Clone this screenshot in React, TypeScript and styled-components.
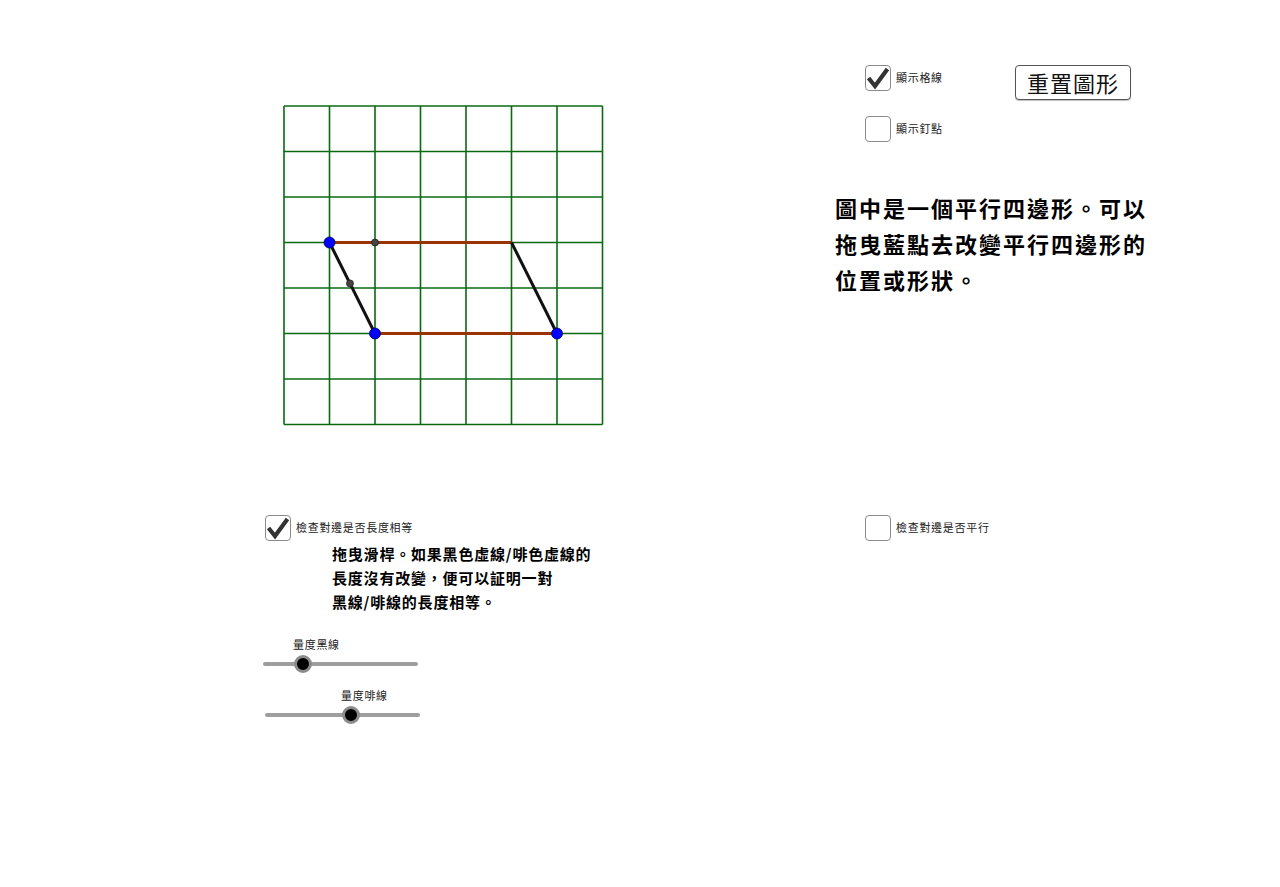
import styled, {createGlobalStyle} from 'styled-components';

const GlobalStyle = createGlobalStyle`
  html, body {
    margin: 0;
    padding: 0;
    background: #ffffff;
  }
  body {
    font-family: "Noto Sans CJK TC", "Noto Sans", sans-serif;
    color: #000;
  }
`

const CELL = 45.5
const GRID = 7

const Board = styled.div`
  display: grid;
  grid-template-columns: 572px 1fr;
  grid-template-rows: 515px auto;
  padding-left: 263px;
  width: 1280px;
  height: 887px;
  box-sizing: border-box;
`

const GraphCell = styled.div`
  padding: 104px 0 0 19px;
`

const SidePanel = styled.div`
  padding-top: 65px;
`

const Controls = styled.div`
  display: flex;
  flex-direction: column;
  gap: 16px;
  padding-left: 30px;
`

const TopRow = styled.div`
  display: grid;
  grid-template-columns: 150px auto;
  align-items: start;
`

const CheckRow = styled.label`
  display: flex;
  align-items: center;
  gap: 5px;
  margin-left: ${p => p.$offset ?? 0}px;
`

const Box = styled.span`
  width: 26px;
  height: 26px;
  box-sizing: border-box;
  border: 1.5px solid #8a8a8a;
  border-radius: 4px;
  background: #fff;
  display: flex;
  align-items: center;
  justify-content: center;
`

const SmallLabel = styled.span`
  font-size: 11px;
  letter-spacing: 0.7px;
  color: #222;
  line-height: 14px;
  margin-top: -2px;
`

const ResetButton = styled.button`
  width: 116px;
  height: 35px;
  background: #fff;
  border: 1px solid #555;
  border-radius: 4px;
  box-shadow: 0 1px 1px rgba(0, 0, 0, 0.25);
  font-family: "Noto Sans CJK TC", sans-serif;
  font-size: 22px;
  letter-spacing: 1px;
  color: #111;
  padding: 0;
  line-height: 33px;
`

const Description = styled.p`
  margin: 47px 0 0 0;
  width: 322px;
  font-size: 22px;
  font-weight: 700;
  letter-spacing: 2px;
  line-height: 36px;
`

const LeftTools = styled.div`
  display: flex;
  flex-direction: column;
`

const RightTools = styled.div`
  padding-left: 30px;
`

const Hint = styled.p`
  margin: 1px 0 0 69px;
  font-size: 15px;
  font-weight: 700;
  letter-spacing: 0.8px;
  line-height: 24px;
`

const SliderBox = styled.div`
  width: 155px;
  margin-top: ${p => p.$top}px;
  margin-left: ${p => p.$shift}px;
`

const SliderLabel = styled.div`
  font-size: 11px;
  letter-spacing: 0.7px;
  line-height: 14px;
  color: #222;
`

const TrackArea = styled.div`
  position: relative;
  height: 20px;
  margin-top: 3px;
  display: flex;
  align-items: center;
`

const Track = styled.div`
  width: 100%;
  height: 4px;
  border-radius: 2px;
  background: #9e9e9e;
`

const Knob = styled.div`
  position: absolute;
  top: 1px;
  width: 12px;
  height: 12px;
  margin-left: -9px;
  border-radius: 50%;
  background: #000;
  border: 3px solid #8c8c8c;
`

const Check = ({on}: {on: boolean}) => (
    <Box>
        {on && (
            <svg width="24" height="24" viewBox="0 0 24 24">
                <path d="M2.5 12 L9 20 L21.5 3" fill="none" stroke="#333" strokeWidth="4.2"
                      strokeLinejoin="miter" strokeLinecap="butt"/>
            </svg>
        )}
    </Box>
)

const CheckItem = ({on, label, offset}: {on: boolean, label: string, offset?: number}) => (
    <CheckRow $offset={offset}>
        <Check on={on}/>
        <SmallLabel>{label}</SmallLabel>
    </CheckRow>
)

const Slider = ({label, value, top, shift}: {label: string, value: number, top: number, shift: number}) => {
    const x = value * 155
    return (
        <SliderBox $top={top} $shift={shift}>
            <SliderLabel style={{marginLeft: x - 10}}>{label}</SliderLabel>
            <TrackArea>
                <Track/>
                <Knob style={{left: x}}/>
            </TrackArea>
        </SliderBox>
    )
}

const Graph = () => {
    const size = CELL * GRID
    const lines = Array.from({length: GRID + 1}, (_, i) => i * CELL)
    const p = (cx: number, cy: number) => [cx * CELL, cy * CELL]
    const [ax, ay] = p(1, 3)
    const [bx, by] = p(5, 3)
    const [cx, cy] = p(2, 5)
    const [dx, dy] = p(6, 5)
    return (
        <svg width={size + 4} height={size + 4} viewBox={`-2 -2 ${size + 4} ${size + 4}`}>
            {lines.map(v => (
                <g key={v}>
                    <line x1={v} y1={0} x2={v} y2={size} stroke="#0a6a10" strokeWidth="1.6"/>
                    <line x1={0} y1={v} x2={size} y2={v} stroke="#0a6a10" strokeWidth="1.6"/>
                </g>
            ))}
            <line x1={ax} y1={ay} x2={bx} y2={by} stroke="#993300" strokeWidth="3"/>
            <line x1={cx} y1={cy} x2={dx} y2={dy} stroke="#993300" strokeWidth="3"/>
            <line x1={ax} y1={ay} x2={cx} y2={cy} stroke="#111" strokeWidth="3"/>
            <line x1={bx} y1={by} x2={dx} y2={dy} stroke="#111" strokeWidth="3"/>
            <circle cx={2 * CELL} cy={3 * CELL} r="3.5" fill="#444" stroke="#222" strokeWidth="0.8"/>
            <circle cx={1.45 * CELL} cy={3.9 * CELL} r="3.5" fill="#444" stroke="#222" strokeWidth="0.8"/>
            {[[ax, ay], [cx, cy], [dx, dy]].map(([x, y]) => (
                <circle key={`${x}-${y}`} cx={x} cy={y} r="5.5" fill="#0000ff" stroke="#00005a" strokeWidth="0.8"/>
            ))}
        </svg>
    )
}

export default function App() {
    return (
        <>
            <GlobalStyle/>
            <Board>
                <GraphCell>
                    <Graph/>
                </GraphCell>
                <SidePanel>
                    <Controls>
                        <TopRow>
                            <CheckItem on={true} label="顯示格線"/>
                            <ResetButton>重置圖形</ResetButton>
                        </TopRow>
                        <CheckItem on={false} label="顯示釘點"/>
                    </Controls>
                    <Description>
                        圖中是一個平行四邊形。可以拖曳藍點去改變平行四邊形的位置或形狀。
                    </Description>
                </SidePanel>
                <LeftTools>
                    <CheckItem on={true} label="檢查對邊是否長度相等" offset={2}/>
                    <Hint>
                        拖曳滑桿。如果黑色虛線/啡色虛線的<br/>
                        長度沒有改變，便可以証明一對<br/>
                        黑線/啡線的長度相等。
                    </Hint>
                    <Slider label="量度黑線" value={0.258} top={23} shift={0}/>
                    <Slider label="量度啡線" value={0.555} top={14} shift={2}/>
                </LeftTools>
                <RightTools>
                    <CheckItem on={false} label="檢查對邊是否平行"/>
                </RightTools>
            </Board>
        </>
    )
}
